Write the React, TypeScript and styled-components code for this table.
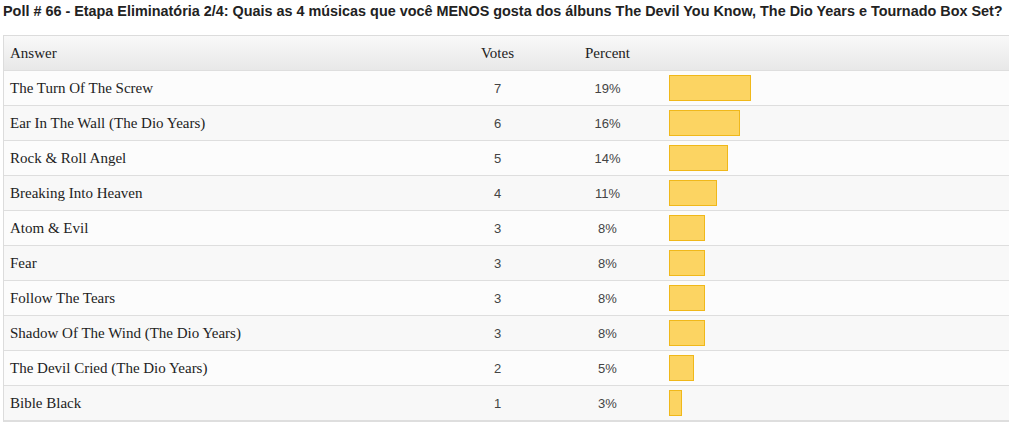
import React from "react";
import styled, { createGlobalStyle } from "styled-components";

const Global = createGlobalStyle`
  html, body { margin: 0; padding: 0; background: #ffffff; overflow: hidden; }
  body { width: 1009px; height: 427px; }
`;

const Page = styled.div`
  padding: 0 0 0 3px;
  width: 1030px;
`;

const Title = styled.h1`
  margin: 0;
  padding: 3px 0 0 0;
  height: 35px;
  box-sizing: border-box;
  font-family: "Liberation Sans", Arial, sans-serif;
  font-weight: bold;
  font-size: 14.4px;
  line-height: 16px;
  color: #222;
  white-space: nowrap;
`;

const Table = styled.div`
  border-left: 1px solid #dcdcdc;
  border-top: 1px solid #dcdcdc;
  border-bottom: 2px solid #dedede;
  display: grid;
  grid-template-columns: 436px 115px 105px 1fr;
`;

const Row = styled.div<{ $head?: boolean; $alt?: boolean }>`
  display: contents;
  & > div {
    height: 34px;
    border-bottom: 1px solid #dedede;
    background: ${(p) =>
      p.$head
        ? "linear-gradient(#f9f9f9, #e8e8e8)"
        : p.$alt
        ? "#f8f8f8"
        : "#fcfcfc"};
  }
  &:last-child > div {
    border-bottom: none;
  }
`;

const Cell = styled.div<{ $serif?: boolean; $center?: boolean }>`
  display: flex;
  align-items: center;
  justify-content: ${(p) => (p.$center ? "center" : "flex-start")};
  padding-left: ${(p) => (p.$center ? "0" : "6px")};
  font-family: ${(p) =>
    p.$serif
      ? `"Liberation Serif", "Times New Roman", serif`
      : `"Liberation Sans", Arial, sans-serif`};
  font-size: ${(p) => (p.$serif ? "15px" : "13px")};
  color: ${(p) => (p.$serif ? "#222" : "#444")};
  white-space: nowrap;
`;

const BarCell = styled.div`
  display: flex;
  align-items: center;
  padding-left: 9px;
`;

const Bar = styled.div`
  height: 26px;
  box-sizing: border-box;
  background: #fcd462;
  border: 1px solid #f0b81a;
`;

const data: [string, number, number, number][] = [
  ["The Turn Of The Screw", 7, 19, 82],
  ["Ear In The Wall (The Dio Years)", 6, 16, 71],
  ["Rock & Roll Angel", 5, 14, 59],
  ["Breaking Into Heaven", 4, 11, 48],
  ["Atom & Evil", 3, 8, 36],
  ["Fear", 3, 8, 36],
  ["Follow The Tears", 3, 8, 36],
  ["Shadow Of The Wind (The Dio Years)", 3, 8, 36],
  ["The Devil Cried (The Dio Years)", 2, 5, 25],
  ["Bible Black", 1, 3, 13],
];

export default function App() {
  return (
    <Page>
      <Global />
      <Title>
        Poll # 66 - Etapa Eliminatória 2/4: Quais as 4 músicas que você MENOS gosta dos álbuns The Devil You Know, The Dio Years e Tournado Box Set?
      </Title>
      <Table>
        <Row $head>
          <Cell $serif>Answer</Cell>
          <Cell $serif $center>Votes</Cell>
          <Cell $serif $center>Percent</Cell>
          <BarCell />
        </Row>
        {data.map(([name, votes, pct, w], i) => (
          <Row key={name} $alt={i % 2 === 1}>
            <Cell $serif>{name}</Cell>
            <Cell $center>{votes}</Cell>
            <Cell $center>{pct}%</Cell>
            <BarCell>
              <Bar style={{ width: w }} />
            </BarCell>
          </Row>
        ))}
      </Table>
    </Page>
  );
}
